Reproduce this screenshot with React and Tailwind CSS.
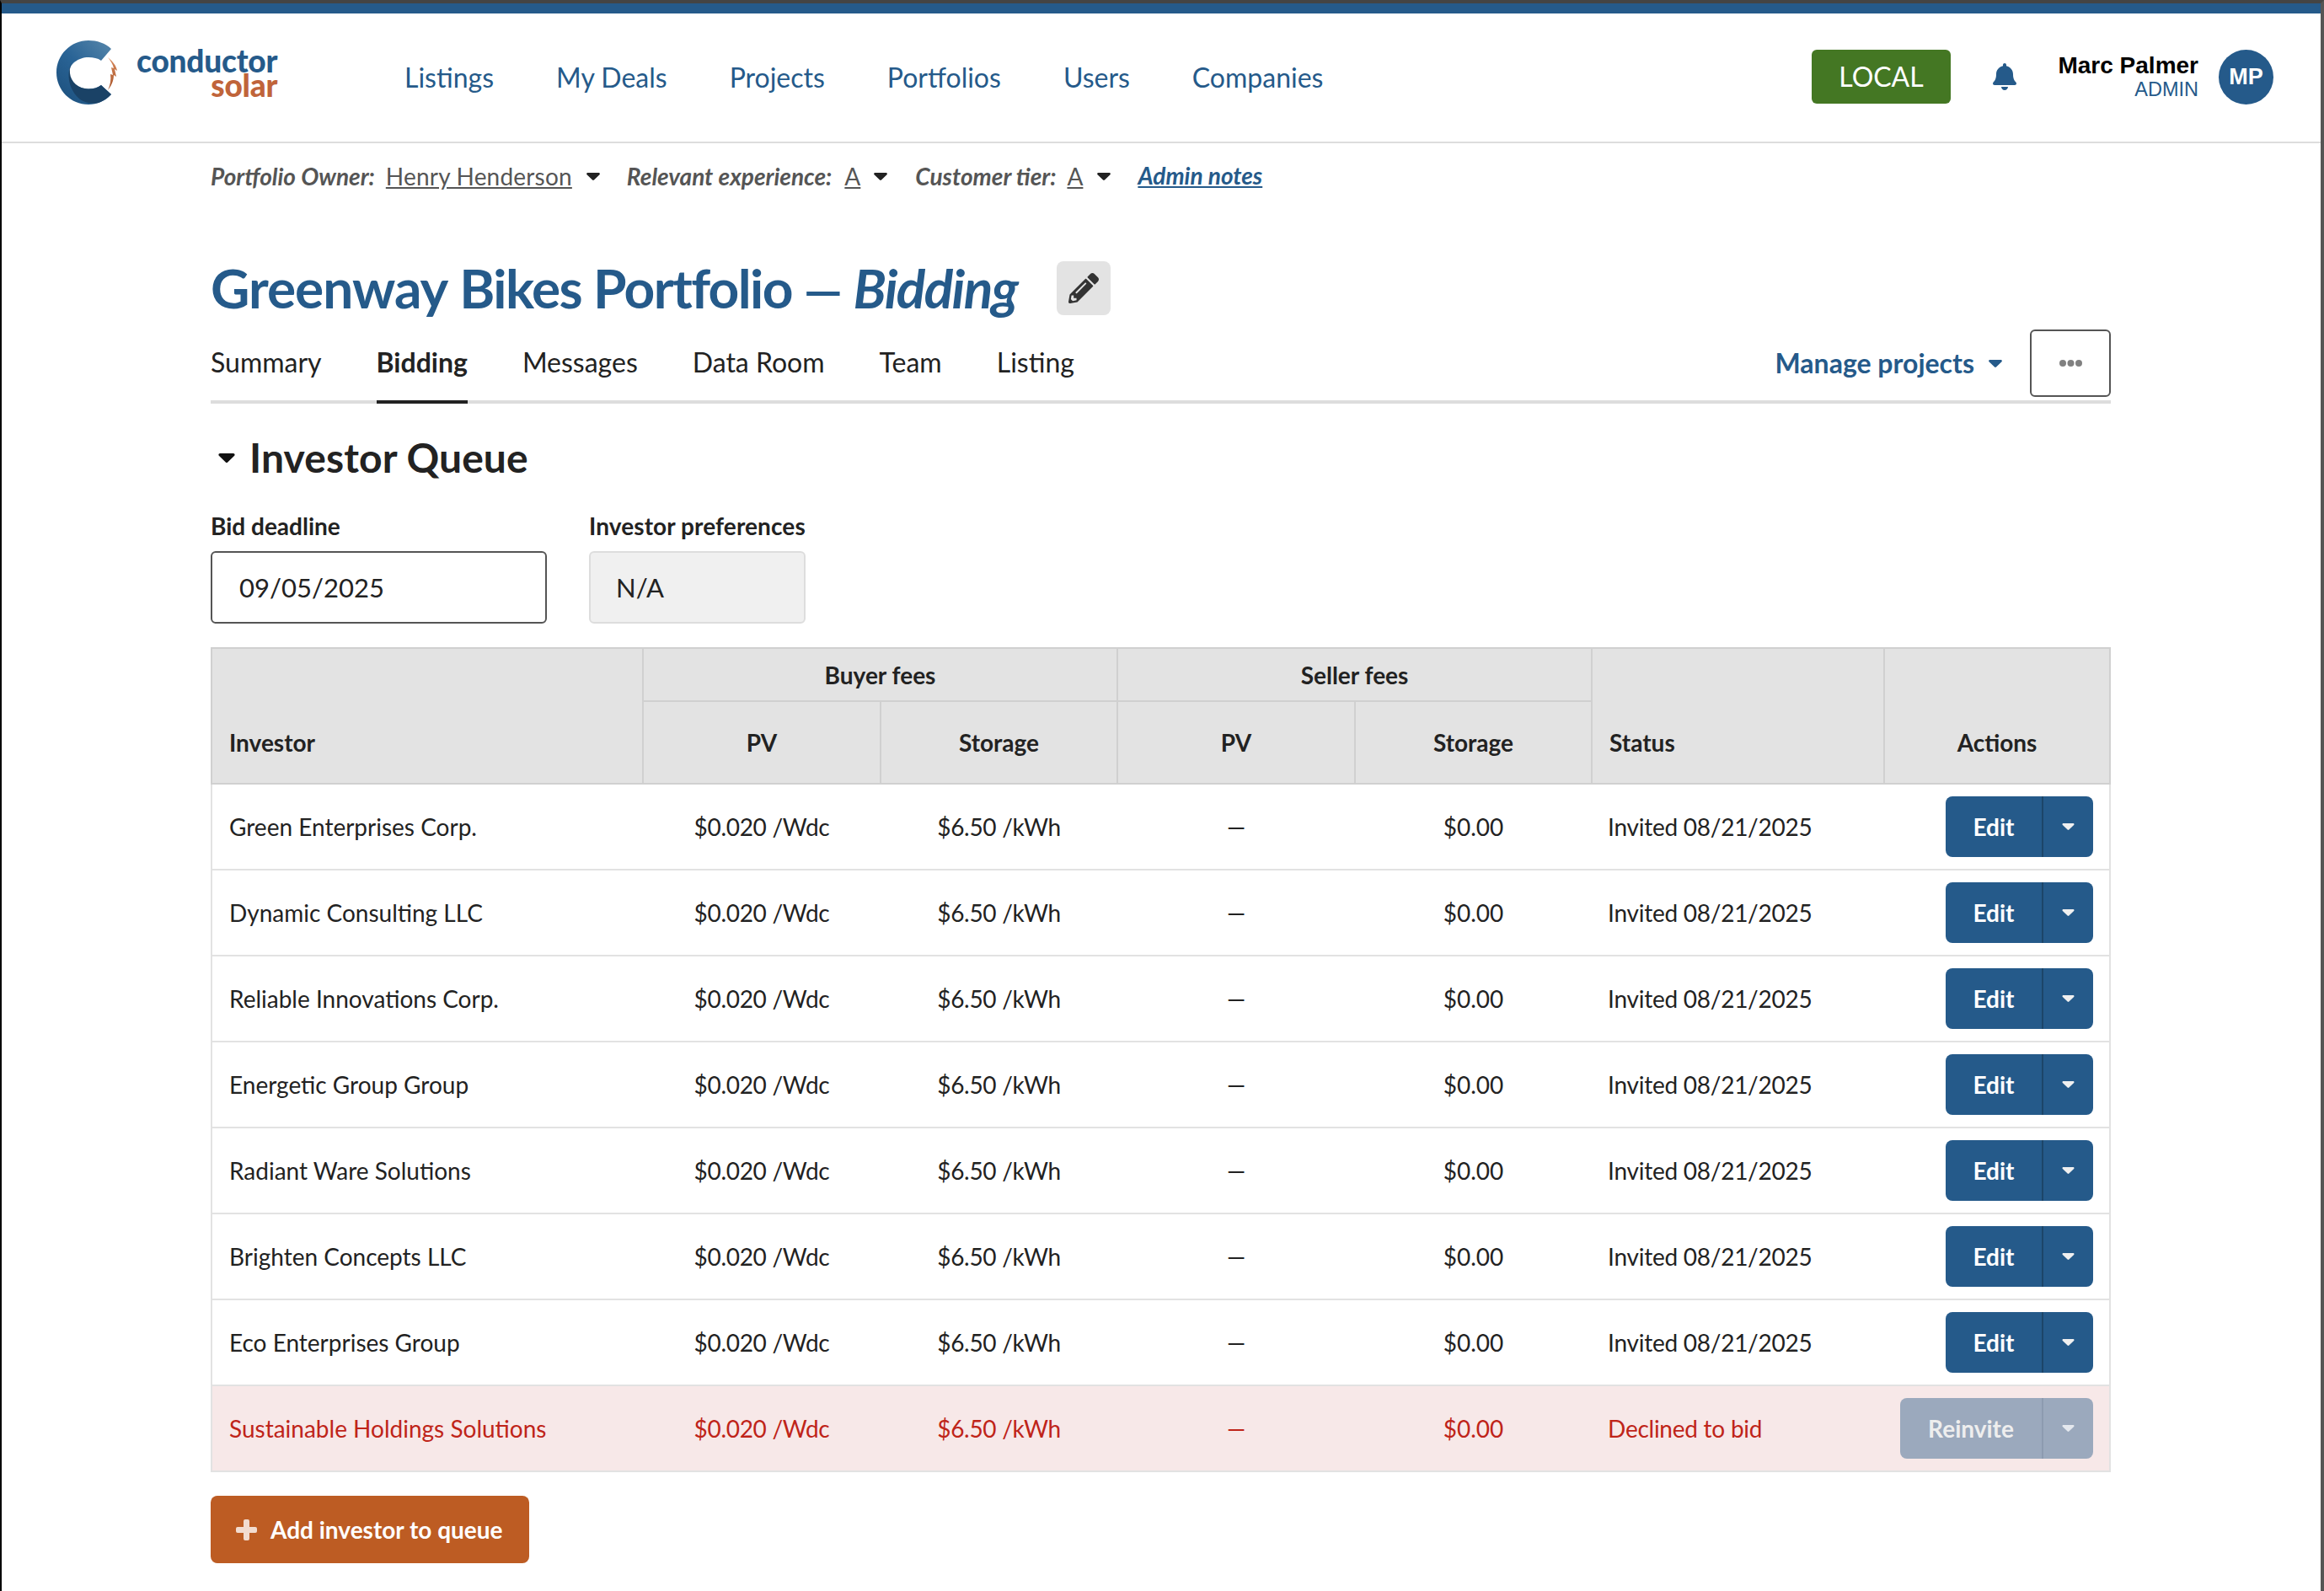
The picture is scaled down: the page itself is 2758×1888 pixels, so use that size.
import React from 'react';
import { FaBell, FaPencilAlt } from 'react-icons/fa';

const NAV = ['Listings', 'My Deals', 'Projects', 'Portfolios', 'Users', 'Companies'];
const TABS = ['Summary', 'Bidding', 'Messages', 'Data Room', 'Team', 'Listing'];
const INVESTORS = [
  'Green Enterprises Corp.',
  'Dynamic Consulting LLC',
  'Reliable Innovations Corp.',
  'Energetic Group Group',
  'Radiant Ware Solutions',
  'Brighten Concepts LLC',
  'Eco Enterprises Group',
];

const Caret = ({ className }) => (
  <svg viewBox="0 0 16 9" className={className} fill="currentColor">
    <path d="M1.5 0h13c1.2 0 1.8 1.4 1 2.3L9 8.5c-.6.6-1.5.6-2 0L.5 2.3C-.3 1.4.3 0 1.500 0z" />
  </svg>
);

const Logo = () => (
  <div className="flex items-center -mt-[8px]">
    <svg viewBox="0 0 80 80" className="w-[80px] h-[80px] mr-[15px]">
      <defs>
        <linearGradient id="ring" x1="0.9" y1="0.1" x2="0.2" y2="0.9">
          <stop offset="0" stopColor="#4d7fa6" />
          <stop offset="0.5" stopColor="#2a6496" />
          <stop offset="1" stopColor="#1f5482" />
        </linearGradient>
        <linearGradient id="bolt" x1="0" y1="0" x2="0" y2="1">
          <stop offset="0" stopColor="#d98a5c" />
          <stop offset="1" stopColor="#a8552a" />
        </linearGradient>
      </defs>
      <path
        d="M65 11 C58 4 48 1 38 1 C17 1 0 18 0 39 C0 60 17 77 38 77 C48 77 58 73 65 65 L53 54 C49 57 44 58.500 38 58.500 C26 58.500 15 50 15 39.500 C15 29 26 21 38 21 C44 21 49 22 53 25 Z"
        fill="url(#ring)"
      />
      <path d="M18 27 C11 42 15 60 28 71 C34 75 43 77 50 75 C55 73 60 70 65 65 L53 54 C49 57 44 58.500 38 58.500 C26 58.500 17 50 16 40 C15.500 35 16.500 31 18 27 Z" fill="#1a4266" />
      <path d="M61 21 C67 26 71 31 72 37 L69 35 L71 44 L68 42 C68 49 65 55 61 60 C64 54 65 47 64 41 L67 42 L65 33 L68 34 C67 29 64 25 61 21 Z" fill="url(#bolt)" />
    </svg>
    <div className="flex flex-col items-end font-black leading-[29px] text-[37px] tracking-[-0.2px] -mt-[2px]">
      <span className="text-[#255a8a]">conductor</span>
      <span className="text-[#c0643a]">solar</span>
    </div>
  </div>
);

const Header = () => (
  <header className="h-[154px] border-b-2 border-[#dddddd] flex items-center pl-[65px] pr-[56px] pb-[2px]">
    <div className="w-[413px] shrink-0">
      <Logo />
    </div>
    <nav className="flex gap-[74px] text-[32px] text-[#255a8a] mt-[2px]">
      {NAV.map((item) => (
        <span key={item}>{item}</span>
      ))}
    </nav>
    <div className="ml-auto flex items-center">
      <div className="w-[165px] h-[64px] bg-[#447723] rounded-[6px] text-white text-[32px] flex items-center justify-center">
        LOCAL
      </div>
      <FaBell className="ml-[50px] text-[#255a8a] w-[28px] h-[32px]" />
      <div className="ml-[48px] w-[168px] text-right font-['Liberation_Sans',sans-serif] leading-[28px] mt-[1px]">
        <div className="text-[28px] font-bold text-black whitespace-nowrap">Marc Palmer</div>
        <div className="text-[23.500px] text-[#255a8a]">ADMIN</div>
      </div>
      <div className="ml-[24px] w-[65px] h-[65px] rounded-full bg-[#255a8a] text-white font-['Liberation_Sans',sans-serif] font-bold text-[27px] flex items-center justify-center">
        MP
      </div>
    </div>
  </header>
);

const SubHeader = () => (
  <div className="flex items-center h-[78px] text-[28px] text-[#555555] italic">
    <span className="font-bold">Portfolio Owner:</span>
    <span className="ml-[13px] not-italic underline tracking-[0.2px]">Henry Henderson</span>
    <Caret className="ml-[17px] w-[16px] h-[9px] text-[#222222]" />
    <span className="ml-[32px] font-bold">Relevant experience:</span>
    <span className="ml-[15px] not-italic underline">A</span>
    <Caret className="ml-[16px] w-[16px] h-[9px] text-[#222222]" />
    <span className="ml-[33px] font-bold">Customer tier:</span>
    <span className="ml-[13px] not-italic underline">A</span>
    <Caret className="ml-[17px] w-[16px] h-[9px] text-[#222222]" />
    <span className="ml-[32px] font-bold text-[#255a8a] underline -mt-[2px]">Admin notes</span>
  </div>
);

const Tabs = () => (
  <div className="flex items-start h-[102px] border-b-4 border-[#dddddd]">
    <div className="flex gap-[65px] text-[32px] text-[#222222]">
      {TABS.map((tab) => (
        <div
          key={tab}
          className={`pt-[31px] h-[102px] border-b-4 leading-[44px] ${
            tab === 'Bidding' ? 'font-bold border-[#222222]' : 'border-transparent'
          }`}
        >
          {tab}
        </div>
      ))}
    </div>
    <div className="ml-auto flex items-center mt-[14px]">
      <span className="text-[32px] font-bold text-[#255a8a]">Manage projects</span>
      <Caret className="ml-[17px] mr-[33px] w-[16px] h-[9px] text-[#255a8a]" />
      <div className="w-[96px] h-[80px] border-2 border-[#555555] rounded-[6px] flex items-center justify-center">
        <svg viewBox="0 0 27 8" className="w-[27px] h-[8px]" fill="#808080">
          <circle cx="4" cy="4" r="4" />
          <circle cx="13.500" cy="4" r="4" />
          <circle cx="23" cy="4" r="4" />
        </svg>
      </div>
    </div>
  </div>
);

const SplitButton = ({ label, disabled }) => (
  <div
    className={`ml-auto flex h-[72px] rounded-[8px] text-[28px] font-bold ${
      disabled ? 'w-[229px] bg-[#9ba9bd] text-[#eeeeee]' : 'w-[175px] bg-[#255a8a] text-white'
    }`}
  >
    <div className={`flex-1 flex items-center justify-center border-r-2 ${disabled ? 'border-[#8d9bb0]' : 'border-[#1c4569]'}`}>
      {label}
    </div>
    <div className="w-[59px] flex items-center justify-center">
      <Caret className={`w-[15px] h-[8px] ${disabled ? 'text-[#e4e8ee]' : 'text-[#f0f0f0]'}`} />
    </div>
  </div>
);

const Row = ({ name, status, button, declined }) => (
  <tr className={`h-[102px] border-2 border-[#e2e2e2] ${declined ? 'bg-[#f7e8e8] text-[#bf2419]' : 'text-[#222222]'}`}>
    <td className="pl-[20px]">{name}</td>
    <td className="text-center tracking-[-0.3px]">$0.020 /Wdc</td>
    <td className="text-center tracking-[-0.3px]">$6.50 /kWh</td>
    <td className="text-center">—</td>
    <td className="text-center">$0.00</td>
    <td className="pl-[19px] tracking-[-0.25px]">{status}</td>
    <td className="pr-[19px]">
      <SplitButton label={button} disabled={declined} />
    </td>
  </tr>
);

const QueueTable = () => (
  <table className="w-full table-fixed border-collapse text-[28px]">
    <colgroup>
      <col className="w-[512px]" />
      <col className="w-[282px]" />
      <col className="w-[281px]" />
      <col className="w-[282px]" />
      <col className="w-[281px]" />
      <col className="w-[347px]" />
      <col />
    </colgroup>
    <thead className="bg-[#e3e3e3] text-[#222222] font-bold">
      <tr className="h-[63px]">
        <th rowSpan={2} className="border-2 border-[#d0d0d0] align-bottom text-left pl-[20px] pb-[27px] font-bold">Investor</th>
        <th colSpan={2} className="border-2 border-[#d0d0d0] font-bold">Buyer fees</th>
        <th colSpan={2} className="border-2 border-[#d0d0d0] font-bold">Seller fees</th>
        <th rowSpan={2} className="border-2 border-[#d0d0d0] align-bottom text-left pl-[20px] pb-[27px] font-bold">Status</th>
        <th rowSpan={2} className="border-2 border-[#d0d0d0] align-bottom pb-[27px] font-bold">Actions</th>
      </tr>
      <tr className="h-[98px]">
        <th className="border-2 border-[#d0d0d0] font-bold">PV</th>
        <th className="border-2 border-[#d0d0d0] font-bold">Storage</th>
        <th className="border-2 border-[#d0d0d0] font-bold">PV</th>
        <th className="border-2 border-[#d0d0d0] font-bold">Storage</th>
      </tr>
    </thead>
    <tbody>
      {INVESTORS.map((name) => (
        <Row key={name} name={name} status="Invited 08/21/2025" button="Edit" />
      ))}
      <Row name="Sustainable Holdings Solutions" status="Declined to bid" button="Reinvite" declined />
    </tbody>
  </table>
);

export default function App() {
  return (
    <div className="min-h-[1888px] bg-white font-['Lato',sans-serif] border-t-4 border-t-[#444444] border-l-2 border-l-black border-r-4 border-r-[#555555]">
      <div className="h-[12px] bg-[#255a8a]" />
      <Header />
      <main className="w-[2255px] ml-[248px]">
        <SubHeader />
        <div className="flex items-center mt-[59px] h-[70px]">
          <h1 className="text-[64px] font-bold text-[#255a8a] tracking-[-1.6px] leading-none whitespace-nowrap">
            <span className="tracking-[-1px]">Greenway</span> Bikes Portfolio <span className="text-[58px]">—</span> <em>Bidding</em>
          </h1>
          <div className="ml-[47px] w-[64px] h-[64px] rounded-[8px] bg-[#e3e3e3] flex items-center justify-center">
            <FaPencilAlt className="w-[36px] h-[36px] text-[#333333]" />
          </div>
        </div>
        <Tabs />
        <div className="flex items-center mt-[30px] h-[68px]">
          <Caret className="ml-[9px] w-[20px] h-[11px] text-[#111111]" />
          <h2 className="ml-[17px] text-[48px] font-bold text-[#222222] tracking-[0.1px]">Investor Queue</h2>
        </div>
        <div className="flex gap-[50px] mt-[25px] text-[28px] font-bold text-[#222222]">
          <div className="w-[399px]">
            <div className="h-[52px] leading-[44px]">Bid deadline</div>
            <div className="h-[86px] border-2 border-[#555555] rounded-[6px] flex items-center pl-[32px] text-[31px] font-normal">
              09/05/2025
            </div>
          </div>
          <div className="w-[257px]">
            <div className="h-[52px] leading-[44px] whitespace-nowrap tracking-[0.1px]">Investor preferences</div>
            <div className="h-[86px] border-2 border-[#dddddd] bg-[#f0f0f0] rounded-[6px] flex items-center pl-[30px] text-[31px] font-normal">
              N/A
            </div>
          </div>
        </div>
        <div className="mt-[28px]">
          <QueueTable />
        </div>
        <button className="mt-[28px] w-[378px] h-[80px] rounded-[8px] bg-[#bd5c23] text-white text-[28px] font-bold flex items-center pl-[30px]">
          <svg viewBox="0 0 25 25" className="w-[25px] h-[25px] mr-[16px]" fill="#f2dcd0">
            <path d="M9 2a2 2 0 0 1 2-2h3a2 2 0 0 1 2 2v7h7a2 2 0 0 1 2 2v3a2 2 0 0 1-2 2h-7v7a2 2 0 0 1-2 2h-3a2 2 0 0 1-2-2v-7H2a2 2 0 0 1-2-2v-3a2 2 0 0 1 2-2h7z" />
          </svg>
          Add investor to queue
        </button>
      </main>
    </div>
  );
}
